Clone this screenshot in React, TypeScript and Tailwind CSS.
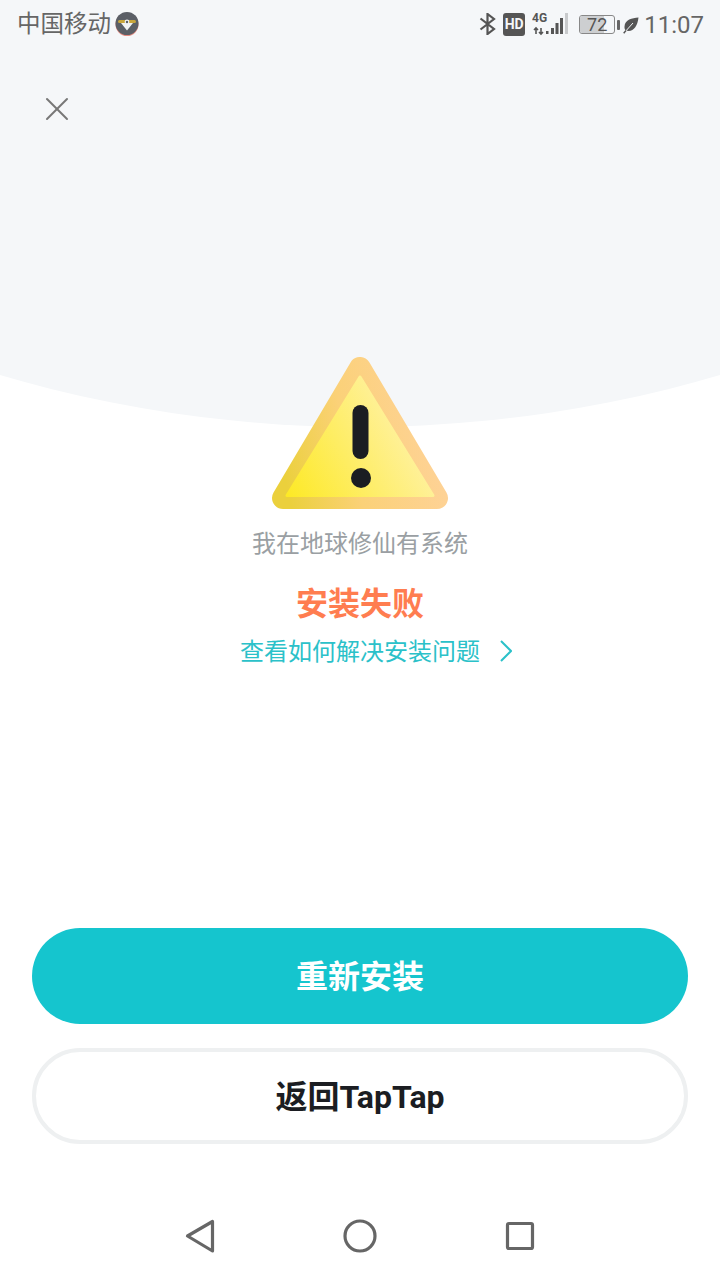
import { X } from "lucide-react";

const FONT = "font-['Roboto','Noto_Sans_CJK_SC',sans-serif]";

// Status bar glyphs are small and blurry in the reference, so they are hand drawn
function Bluetooth() {
  return (
    <svg width="17" height="22" viewBox="0 0 17 22" fill="none" stroke="#555" strokeWidth="2.2" className="mb-[3px]">
      <path d="M1.5 5.5 L15 16 L8.5 21 V1 L15 6 L1.5 16.5" />
    </svg>
  );
}

function Signal() {
  return (
    <svg width="36" height="26" viewBox="0 0 36 26">
      <text x="0" y="10" fontSize="12" fontWeight="700" fill="#555" fontFamily="Roboto, sans-serif">4G</text>
      <path d="M4 22 V16 M2 18 L4 16 L6 18 M9 16 V22 M7 20 L9 22 L11 20" fill="none" stroke="#555" strokeWidth="1.6" />
      <rect x="14" y="19" width="2.5" height="3" fill="#555" />
      <rect x="19" y="16" width="3" height="6" fill="#555" />
      <rect x="23.5" y="11" width="3" height="11" fill="#555" />
      <rect x="28" y="6" width="3" height="16" fill="#555" />
      <rect x="33" y="1" width="3" height="21" fill="#c8cacc" />
    </svg>
  );
}

function Leaf() {
  return (
    <svg width="16" height="17" viewBox="0 0 16 17">
      <path d="M15.5 0.5 C9 1 2 2.5 1.5 9.5 C1.3 11.5 2 13 3 13.5 C10 15.5 14.5 9.5 15.5 0.5Z" fill="#555" />
      <path d="M1 16 L10 6" stroke="#f5f7f9" strokeWidth="1" />
      <path d="M0.7 16.3 L3 13.5" stroke="#555" strokeWidth="1.4" />
    </svg>
  );
}

function Carrier() {
  return (
    <svg width="24" height="24" viewBox="0 0 24 24" className="mb-[2px]">
      <circle cx="12" cy="12.5" r="11.5" fill="#e58a80" />
      <circle cx="12" cy="11.5" r="11.5" fill="#5b5f66" />
      <path d="M6 11 H18 L12 18.5Z" fill="#f2f3f4" />
      <rect x="3" y="8" width="18" height="3" rx="1.5" fill="#c9a63c" />
      <circle cx="12" cy="10" r="2.4" fill="#f2f3f4" />
      <circle cx="12" cy="10" r="1.2" fill="#5b5f66" />
    </svg>
  );
}

function StatusBar() {
  return (
    <div className="flex h-[50px] items-center justify-between pl-[17px] pr-[16px]">
      <div className="flex items-center gap-[4px]">
        <span className="text-[23.5px] leading-none text-[#666]">中国移动</span>
        <Carrier />
      </div>
      <div className="flex items-center">
        <Bluetooth />
        <div className="mb-[2px] ml-[7px] flex h-[23px] w-[22px] items-center justify-center rounded-[3px] bg-[#555] text-[14px] font-bold leading-none text-[#f5f7f9]">
          HD
        </div>
        <div className="ml-[7px]">
          <Signal />
        </div>
        <div className="mb-[1px] ml-[11px] flex items-center">
          <div className="relative flex h-[19px] w-[36px] items-center justify-center overflow-hidden rounded-[3px] border border-[#888]">
            <div className="absolute inset-y-0 left-0 w-[24px] bg-[#cdcfd1]" />
            <span className="relative text-[18px] leading-none text-[#555]">72</span>
          </div>
          <div className="ml-[2px] h-[10px] w-[3px] rounded-[1px] bg-[#666]" />
        </div>
        <div className="ml-[3px]">
          <Leaf />
        </div>
        <span className="ml-[5px] text-[24px] leading-none text-[#666]">11:07</span>
      </div>
    </div>
  );
}

function WarningIcon() {
  return (
    <svg width="180" height="153" viewBox="0 0 180 153">
      <defs>
        <linearGradient id="rim" x1="0" y1="0.8" x2="1" y2="0.6">
          <stop offset="0" stopColor="#ebd03c" />
          <stop offset="0.45" stopColor="#fbd178" />
          <stop offset="1" stopColor="#fed296" />
        </linearGradient>
        <linearGradient id="fill" x1="0" y1="1" x2="1" y2="0.55">
          <stop offset="0" stopColor="#fde926" />
          <stop offset="1" stopColor="#fff2ac" />
        </linearGradient>
      </defs>
      <path d="M90 11 L167 141 H13Z" fill="url(#rim)" stroke="url(#rim)" strokeWidth="22" strokeLinejoin="round" />
      <path d="M90 20 L163 138.5 H17Z" fill="url(#fill)" stroke="url(#fill)" strokeWidth="3" strokeLinejoin="round" />
      <rect x="82.5" y="48" width="16" height="54" rx="8" fill="#1b1d22" />
      <circle cx="91" cy="121" r="10" fill="#1b1d22" />
    </svg>
  );
}

function NavBar() {
  return (
    <div className="flex justify-center gap-[104px] pt-[4px]">
      <svg width="56" height="40" viewBox="0 0 56 40" fill="none" stroke="#666" strokeWidth="3.2" strokeLinejoin="round">
        <path d="M40.5 5.5 V35 L15.5 20Z" />
      </svg>
      <svg width="56" height="40" viewBox="0 0 56 40" fill="none" stroke="#666" strokeWidth="3.2">
        <circle cx="28" cy="20" r="15" />
      </svg>
      <svg width="56" height="40" viewBox="0 0 56 40" fill="none" stroke="#666" strokeWidth="3.2" strokeLinejoin="round">
        <rect x="15.5" y="7.5" width="25" height="25" rx="1.5" />
      </svg>
    </div>
  );
}

export default function App() {
  return (
    <div className={`relative flex h-[1280px] w-[720px] flex-col overflow-hidden bg-white ${FONT}`}>
      {/* Grey dome behind the status bar and the top of the warning icon */}
      <div className="absolute left-1/2 top-[-2117px] h-[2544px] w-[2544px] -translate-x-1/2 rounded-full bg-[#f5f7f9]" />

      <div className="relative flex h-full flex-col">
        <StatusBar />

        <button className="ml-[37px] mt-[39px] flex h-[40px] w-[40px] items-center justify-center" aria-label="Close">
          <X size={40} strokeWidth={2} className="shrink-0 text-[#777]" absoluteStrokeWidth />
        </button>

        <div className="mt-[228px] flex flex-col items-center">
          <WarningIcon />
          <p className="mt-[17px] text-[24px] leading-[34px] text-[#9a9fa3]">我在地球修仙有系统</p>
          <p className="mt-[23px] text-[32px] font-bold leading-[40px] text-[#ff7d50]">安装失败</p>
          <a className="mt-[11px] flex items-center pl-[32px] text-[24px] leading-[34px] text-[#2bc1c9]">
            查看如何解决安装问题
            <svg width="12" height="24" viewBox="0 0 12 24" fill="none" stroke="currentColor" strokeWidth="2" className="mb-[2px] ml-[20px]">
              <path d="M1 2 L11 12 L1 22" />
            </svg>
          </a>
        </div>

        <div className="mt-auto px-[32px]">
          <button className="flex h-[96px] w-full items-center justify-center rounded-full bg-[#15c5ce] pt-[2px] text-[32px] font-bold text-white">
            重新安装
          </button>
          <button className="mt-[24px] flex h-[96px] w-full items-center justify-center rounded-full border-[4px] border-[#eef0f1] bg-white pt-[1px] text-[32px] font-bold text-[#1b1d22]">
            返回TapTap
          </button>
        </div>

        <div className="mb-[24px] mt-[68px]">
          <NavBar />
        </div>
      </div>
    </div>
  );
}
